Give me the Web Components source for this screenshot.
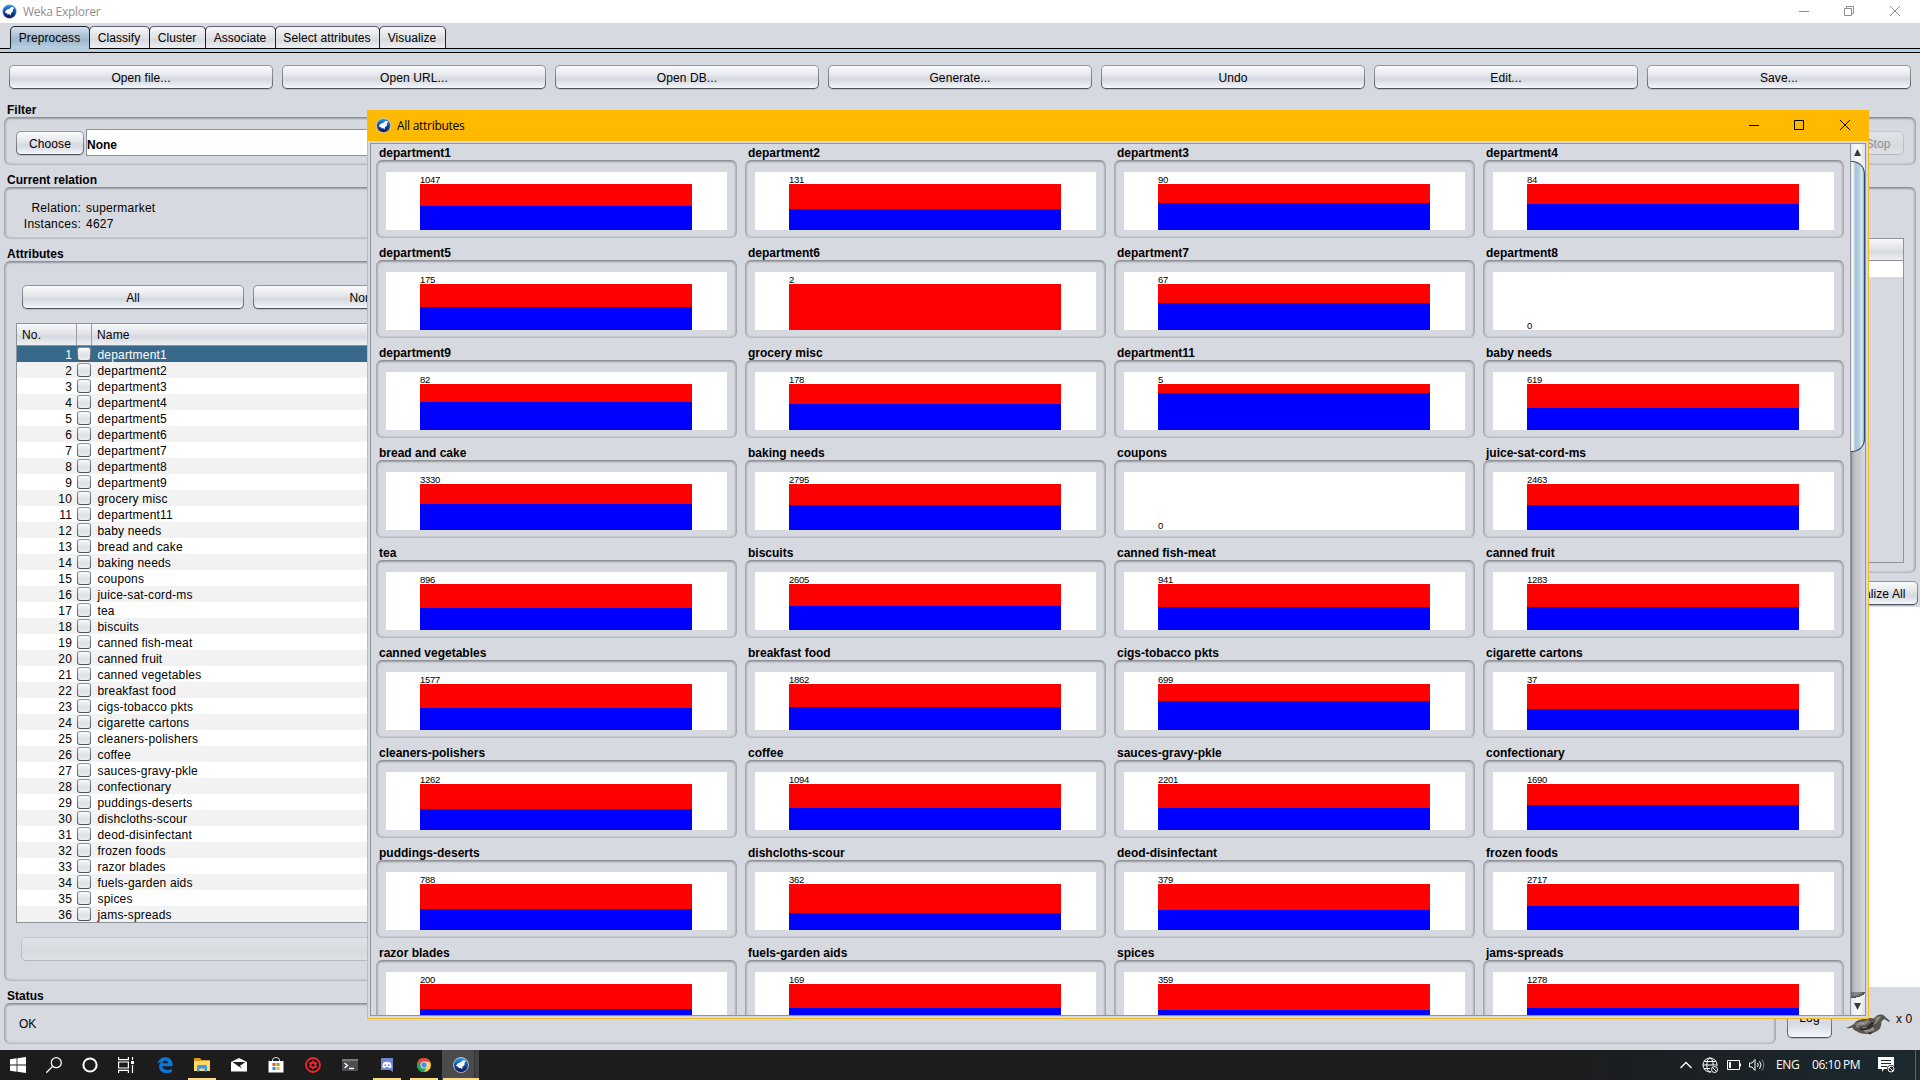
<!DOCTYPE html>
<html lang="en">
<head>
<meta charset="utf-8">
<title>Weka Explorer</title>
<style>
html,body{margin:0;height:1080px;overflow:hidden;background:#d6d9df}
body{font:12px/15px "Liberation Sans",Arial,sans-serif;color:#000;width:1920px}
</style>
</head>
<body>
<weka-desktop></weka-desktop>
<script>
const define=(name,html,init)=>customElements.define(name,class extends HTMLElement{
  constructor(){super();this.attachShadow({mode:'open'});}
  connectedCallback(){
    if(this.ready)return;this.ready=true;
    const t=document.createElement('template');
    t.innerHTML=typeof html==='function'?html(this):html;
    this.shadowRoot.append(t.content.cloneNode(true));
    if(init)init(this);
  }
});
const attr=(e,n,d='')=>e.getAttribute(n)??d;

const wekaIcon=`<svg viewBox="0 0 16 16" width="100%" height="100%"><defs><linearGradient id="g" x1="0" y1="0" x2="0" y2="1"><stop offset="0" stop-color="#2e9be8"/><stop offset=".45" stop-color="#1556b0"/><stop offset="1" stop-color="#0a0f4a"/></linearGradient></defs><circle cx="8" cy="8" r="7.5" fill="url(#g)" stroke="#dfe6f0" stroke-width=".7"/><path d="M3 8.400 5 6.200 8 5 10 3.200l1.800.1 1.200 1.200-1.300.8-.2 2.700-1.900 1.800-.5 2.400-1.700-1.500-1.900.6.1-1.500-1.600-.3z" fill="#fff"/></svg>`;

define('weka-icon',`<style>:host{display:block;width:15px;height:15px;flex:none}svg{display:block}</style>${wekaIcon}`);

define('title-bar',e=>`<style>
:host{display:flex;align-items:center;box-sizing:border-box;flex:none;font:12px/16px "Open Sans","Noto Sans",sans-serif;letter-spacing:-.28px}
span{flex:1;white-space:nowrap;padding-top:2px}
svg{display:block;flex:none;fill:none;stroke:currentColor}
</style><weka-icon></weka-icon><span><slot></slot></span>
<svg width="108" height="12" stroke-width="1">
<path d="M1 6.5h10"/>
${e.hasAttribute('restored')?'<path d="M46.5 3.5h7v7h-7zM48.5 3.5v-2h7v7h-2"/>':'<path d="M46.5 1.5h9v9h-9z"/>'}
<path d="M92 1 102 11M102 1 92 11"/></svg>`);

define('nimbus-button',`<style>
:host{display:flex;align-items:center;justify-content:center;box-sizing:border-box;height:24px;flex:none;border:1px solid transparent;border-radius:5px;white-space:nowrap;letter-spacing:.1px;
background:linear-gradient(#fafbfc,#e6e8ec 40%,#d5d8df 60%,#e3e6ec 80%,#f4f7fc) padding-box,linear-gradient(#94979c,#85898f 50%,#4d5259) border-box;box-shadow:0 1px 0 rgba(110,115,125,.28)}
:host([disabled]){color:#8e8f91;background:linear-gradient(#dfe2e6,#d9dce1 50%,#d6d9df 60%,#dee1e6) padding-box,linear-gradient(#c6c9cd,#b5b8be) border-box;box-shadow:none}
div{padding-top:3px}
</style><div><slot></slot></div>`);

define('nimbus-tab',`<style>
:host{display:flex;align-items:center;justify-content:center;box-sizing:border-box;height:23px;border:1px solid #1c2230;border-top-color:#5f646e;border-bottom:1px solid #000;border-radius:5px 5px 0 0;margin-left:-1px;white-space:nowrap;
background:linear-gradient(#f7f8fa,#dfe1e6 50%,#d6d9df 60%,#eceef2);letter-spacing:.08px}
:host([selected]){background:linear-gradient(#d6e0ea,#abc0d2 45%,#9fb8ce 65%,#b9cfe0);border-bottom-color:#b2c9da;border-top-color:#1c2230}
div{padding:1px 1px 0 0}
</style><div><slot></slot></div>`);

define('titled-panel',e=>`<style>
:host{display:flex;flex-direction:column;flex:none;box-sizing:border-box}
h2{margin:0;height:15px;font:bold 12px/17px "Liberation Sans",Arial,sans-serif;padding-left:3px;white-space:nowrap}
section{flex:1;box-sizing:border-box;border:1px solid #a6a9ae;border-top-color:#8d9095;border-bottom-color:#b7babf;border-radius:6px;
box-shadow:inset 0 1px 2px rgba(60,64,72,.34),inset 1px 0 2px rgba(60,64,72,.14),inset -1px 0 2px rgba(60,64,72,.14);display:flex;flex-direction:column;min-height:0}
</style><h2>${attr(e,'heading')}</h2><section><slot></slot></section>`);

define('attr-row',e=>{const n=+attr(e,'no'),sel=n===1;return `<style>
:host{display:flex;height:16px;align-items:center;background:${sel?'#39698a':n%2?'#fff':'#f2f2f2'};color:${sel?'#fff':'#000'};letter-spacing:.18px;white-space:nowrap}
i{font-style:normal;width:55px;text-align:right}
b{display:block;box-sizing:border-box;width:14px;height:14px;margin:0 6.500px 0 5px;border:1px solid transparent;border-radius:3px;background:linear-gradient(#fafbfc,#dcdfe5 60%,#eceff4) padding-box,linear-gradient(#94979c,#4d5259) border-box}
span,i{padding-top:3px}
</style><i>${n}</i><b></b><span>${attr(e,'name')}</span>`});

define('attr-table',`<style>
:host{display:flex;flex-direction:column;box-sizing:border-box;border:1px solid #8f939b;background:#fff;flex:none;overflow:hidden}
header{display:flex;height:22px;box-sizing:border-box;border-bottom:1px solid #8b8f97;background:linear-gradient(#f7f8fa,#e2e4e9 45%,#d6d9df 60%,#eef0f4);letter-spacing:.15px}
header div{box-sizing:border-box;padding:4px 0 0 5px;border-right:1px solid #9a9da3}
</style><header><div style="width:60px">No.</div><div style="width:15px"></div><div style="flex:1">Name</div></header><slot></slot>`);

define('attr-chart',e=>{const r=attr(e,'red');return `<style>
:host{display:block;width:361px;height:93px}
titled-panel{height:93px}
.plot{background:#fff;margin:11px 9px 7px;height:58px;padding:0 35px 0 34px;display:flex;flex-direction:column;box-sizing:border-box}
.n{height:12px;font-size:9.500px;line-height:16px;white-space:nowrap;letter-spacing:-.3px;${r?'':'margin-top:46px'}}
.r{height:${r||0}px;background:#f00}.b{flex:1;background:${r?'#00f':'none'}}
</style><titled-panel heading="${attr(e,'name')}"><div class="plot"><div class="n">${attr(e,'count')}</div><div class="r"></div><div class="b"></div></div></titled-panel>`});

define('nimbus-scroll',`<style>
:host{display:flex;flex-direction:column;width:15px;flex:none;box-sizing:border-box;border-left:1px solid #8f9298}
.u,.d{height:17px;background:linear-gradient(90deg,#e4e6ea,#fbfbfc 50%,#e0e2e7);display:flex;align-items:center;padding-left:2px;flex:none}
svg{display:block}
.track{flex:1;background:linear-gradient(90deg,#77787c,#aeb0b4 12%,#c3c4c9 35%,#cbcdd2 70%,#d9dbe0);display:flex;flex-direction:column}
.top{background:linear-gradient(#eceef1 50%,#0000 50%)}
.thumb{height:291px;box-sizing:border-box;border:1px solid #2d4b66;border-left:0;border-radius:0 13px 13px 0;background:linear-gradient(90deg,#dfe8ef 0,#f4f8fb 15%,#a9c3d8 34%,#b4cddf 60%,#d5ecf8 82%,#8fb0c8)}
.end{margin-top:auto;height:6px;background:radial-gradient(ellipse 14px 6px at 0 0,rgba(70,72,76,.5) 60%,#45474b 99%,#eceef1 100%)}
</style><div class="u"><svg width="9" height="9"><path d="M4.500 1 8 8H1z" fill="#3a3a3c"/></svg></div>
<div class="track"><div class="top"><div class="thumb"></div></div><div class="end"></div></div>
<div class="d"><svg width="9" height="9"><path d="M4.500 8 8 1H1z" fill="#3a3a3c"/></svg></div>`);

const names='department1,department2,department3,department4,department5,department6,department7,department8,department9,grocery misc,department11,baby needs,bread and cake,baking needs,coupons,juice-sat-cord-ms,tea,biscuits,canned fish-meat,canned fruit,canned vegetables,breakfast food,cigs-tobacco pkts,cigarette cartons,cleaners-polishers,coffee,sauces-gravy-pkle,confectionary,puddings-deserts,dishcloths-scour,deod-disinfectant,frozen foods,razor blades,fuels-garden aids,spices,jams-spreads'.split(',');
const counts=[1047,131,90,84,175,2,67,0,82,178,5,619,3330,2795,0,2463,896,2605,941,1283,1577,1862,699,37,1262,1094,2201,1690,788,362,379,2717,200,169,359,1278];
const reds=[22,25,19,20,23,46,19,0,18,20,9,24,20,21,0,21,24,22,23,23,24,23,17,25,25,24,24,21,25,29,26,22,25,24,26,24];

define('attributes-window',`<style>
:host{display:flex;flex-direction:column;box-sizing:border-box;width:1502px;height:909px;border:1px solid #f9b924;border-top:0;background:#d6d9df}
title-bar{height:31px;background:#ffb900;padding:0 12px 1px 8px}
.view{flex:1;min-height:0;display:flex;box-sizing:border-box;margin:2px 2px 2px 2px;border:1px solid #8f939b;overflow:hidden}
.grid{flex:1;display:grid;grid-template-columns:repeat(4,361px);grid-auto-rows:93px;gap:7px 8px;padding:1px 0 0 5px;align-content:start}
</style><title-bar><weka-caption>All attributes</weka-caption></title-bar>
<div class="view"><div class="grid">${names.map((n,i)=>`<attr-chart name="${n}" count="${counts[i]}" red="${reds[i]||''}"></attr-chart>`).join('')}</div><nimbus-scroll></nimbus-scroll></div>`);
define('weka-caption',`<style>:host{display:inline-block;padding-left:6px}</style><slot></slot>`);

const ic={
start:'<path fill="#fff" d="M0 2.2 6.6 1.3v6.3H0zM7.4 1.2 16 0v7.6H7.4zM0 8.4h6.6v6.3L0 13.8zM7.4 8.4H16V16L7.4 14.8z"/>',
search:'<g fill="none" stroke="#fff" stroke-width="1.3"><circle cx="10.3" cy="5.7" r="5"/><path d="M6.7 9.3.3 15.7"/></g>',
cortana:'<circle cx="8" cy="8" r="6.6" fill="none" stroke="#fff" stroke-width="2"/>',
view:'<g fill="none" stroke="#fff" stroke-width="1.2"><path d="M.6 0v2.6h9.8V0M.6 16v-2.6h9.8V16M.6 5h9.8v6H.6zM14.5 0v3M14.5 8v8"/></g><path fill="#fff" d="M13 4h3v3h-3z"/>',
edge:'<path fill="#0a78d7" d="M.5 7.2C1.2 3 4.2.3 8.2.3c4.8 0 7.4 3.4 7.4 7.2v1.8H5.4c.2 2.3 2.1 3.6 4.8 3.6 1.7 0 3.2-.4 4.5-1.2v3.2c-1.3.7-3.1 1.1-5.1 1.1-4.6 0-7.5-2.6-7.5-6.6 0-2 .9-3.8 2.8-5C3 5 1.400 5.600.5 7.200zM5.500 6.300h5.400c0-1.700-1-2.700-2.600-2.700-1.500 0-2.500 1-2.800 2.700z"/>',
folder:'<path fill="#d79a1c" d="M0 1h6l1.500 2H16v3H0z"/><path fill="#ffd969" d="M0 4h16v10H0z"/><path fill="#3f9be0" d="M3 14.500V9.500Q3 8 4.500 8h7Q13 8 13 9.500v5h-2.500v-3h-5v3z"/>',
mail:'<path fill="#fff" d="M0 5 8 1l8 4v9.500H0z"/><path fill="#1c1c1c" d="M1.500 5h13L9 8.800 11 11.500 7 9z"/>',
store:'<path fill="none" stroke="#ddd" d="M4.500 5V3q0-2.500 3.500-2.500T11.500 3v2"/><path fill="#fff" d="M.500 4h15v11.500H.500z"/><path fill="#f25022" d="M4.500 6h3v3h-3z"/><path fill="#7fba00" d="M8.500 6h3v3h-3z"/><path fill="#00a4ef" d="M4.500 10h3v3h-3z"/><path fill="#ffb900" d="M8.500 10h3v3h-3z"/>',
red:'<circle cx="8" cy="8" r="7" fill="#111" stroke="#f0282d" stroke-width="1.800"/><circle cx="8" cy="8" r="2.500" fill="none" stroke="#f0282d" stroke-width="1.800"/><path stroke="#f0282d" stroke-width="1.700" d="M8 3.500V6M8 10v2.500M4.200 5.800l2 1.200M9.800 9l2 1.200M4.200 10.200l2-1.200M9.800 7l2-1.200"/>',
cmd:'<path fill="#4b4d50" d="M0 2h16v12H0z"/><path fill="#77797c" d="M0 2h16v2H0z"/><path d="M2.500 6 5.500 8.500 2.500 11M7 11.500h5" fill="none" stroke="#fff" stroke-width="1.300"/>',
discord:'<path fill="#6f83cf" d="M2 1h12v14l-3-2H2z"/><path fill="#fff" d="M4.500 5.500Q8 3.800 11.500 5.500q1.300 2.500 1 5l-2 .8-.8-1H6.300l-.8 1-2-.8q-.300-2.500 1-5z"/><circle cx="6.300" cy="8.200" r="1" fill="#6f83cf"/><circle cx="9.700" cy="8.200" r="1" fill="#6f83cf"/>',
chrome:'<circle cx="8" cy="8" r="7" fill="#ffcd41"/><path fill="#de4a3d" d="M8 8 1.940 4.500A7 7 0 0 1 14.100 4.600H8z"/><path fill="#23a05c" d="M8 8 1.940 4.500A7 7 0 0 0 8 15l3-5z"/><path fill="#de4a3d" d="M8 4.600h6.100A7 7 0 0 0 1.940 4.500L5 9z"/><circle cx="8" cy="8" r="3.500" fill="#f4f4f4"/><circle cx="8" cy="8" r="2.700" fill="#4a8bf0"/>'
};
define('task-item',e=>{const k=attr(e,'icon');return `<style>
:host{display:flex;flex-direction:column;align-items:center;width:${e.hasAttribute('sys')?36:37}px;height:30px;flex:none}
:host([active]){background:linear-gradient(90deg,#4b4b4b 32px,#333 32px,#333 33px,#424242 33px)}
.i{height:28px;width:16px;display:flex;align-items:center;padding-top:2px;box-sizing:border-box}
.u{height:2px;width:${e.hasAttribute('active')?36:28}px;background:${e.hasAttribute('open')?'#fbdc84':'none'};flex:none}
svg{display:block}
weka-icon{width:16px;height:16px}
</style><div class="i">${k==='weka'?'<weka-icon></weka-icon>':`<svg width="16" height="16" viewBox="0 0 16 16">${ic[k]}</svg>`}</div><div class="u"></div>`});

define('task-bar',`<style>
:host{display:flex;height:30px;flex:none;background:linear-gradient(90deg,#1c1c1c,#1c1c1d 80%,#1b2024 88%,#1c2a30);color:#fff;box-sizing:border-box;font:12px/16px "Open Sans","Noto Sans",sans-serif}
.gap{width:2px;flex:none}.sp{flex:1}
.tray{display:flex;align-items:center;height:30px;white-space:nowrap}
svg{display:block;flex:none;fill:none;stroke:#fff}
.line{width:1px;height:30px;background:#5a646a;margin-left:20px;margin-right:4px}
</style>
<task-item sys icon="start"></task-item><task-item sys icon="search"></task-item><task-item sys icon="cortana"></task-item><task-item sys icon="view"></task-item><div class="gap"></div>
<task-item icon="edge"></task-item><task-item icon="folder" open></task-item><task-item icon="mail"></task-item><task-item icon="store"></task-item><task-item icon="red"></task-item><task-item icon="cmd"></task-item><task-item icon="discord" open></task-item><task-item icon="chrome" open></task-item><task-item icon="weka" open active></task-item>
<div class="sp"></div>
<div class="tray">
<svg width="14" height="8" style="margin-right:9px"><path stroke-width="1.300" d="M1.500 7 7 1.500 12.500 7"/></svg>
<svg width="17" height="17" style="margin-right:7px"><circle cx="8" cy="8" r="7"/><ellipse cx="8" cy="8" rx="3.200" ry="7"/><path d="M1 8h14M2 4.500h12M2 11.500h6"/><circle cx="12.500" cy="12.500" r="4" fill="#1b2024" stroke="none"/><circle cx="12.500" cy="12.500" r="3"/><path d="m10.500 10.500 4 4"/></svg>
<svg width="16" height="12" style="margin-right:7px"><path d="M1.500 1.500h12v9h-12zM14.500 4.500v3"/><path fill="#fff" stroke="none" d="M3 3h2v6H3z"/></svg>
<svg width="17" height="14" style="margin-right:10px"><path d="M.500 5v4h2.500l3 3.500v-11L3 5zM8.500 5q1.500 2 0 4M10.500 3.200q3 3.800 0 7.600"/><path stroke="#888" d="M12.800 1.500q4 5.500 0 11"/></svg>
<span style="width:36px;letter-spacing:-.4px">ENG</span><span style="width:66px;letter-spacing:-.45px">06:10 PM</span>
<svg width="17" height="16"><path fill="#fff" stroke="none" d="M0 0h16v12H6l-2 3v-3H0z"/><path stroke="#1c262b" d="M3 3.500h10M3 6.500h10M3 9.500h6"/><circle cx="13" cy="12" r="4" fill="#1c262b" stroke="none"/><circle cx="13" cy="12" r="3"/><path d="m11 10 4 4"/></svg>
<div class="line"></div></div>`);

define('weka-bird',`<style>:host{display:block;width:46px;height:24px;flex:none}svg{display:block}</style>
<svg width="46" height="24" viewBox="0 0 46 24"><path fill="#58544f" d="M1 15q5-2 8-4 2-4 7-4.500 5-3 13-1 2-3.500 6-4 3-.500 5 2l5 4.500-.800 1-5-3q-2 2-3 3 1 7-6 10l-9 2q-6 0-10-3-3-1-4-3.500-3 1-6 .500z"/><path fill="#8d8882" d="M10 11q8-4 14-2l-4 3-8 1zM31 4l5-1-2 4-4 4zM18 17l10-3 2 3-9 3z"/><path fill="#2f2c29" d="M13 15l10-2 4-4 3 2-5 5-8 1.500zM22 20l7-1-4 2.500z"/><path fill="none" stroke="#a7a29c" stroke-width=".8" d="M14 9.500l5 1M21 7l4 2M11 13l4 2M17 15l5-1M28 12l3-3M24 18l4-2"/></svg>`);

define('weka-desktop',`<style>
:host{display:flex;flex-direction:column;width:1920px;height:1080px;background:#d6d9df;overflow:hidden}
.main{height:23px;background:#fff;color:#8f8f8f;padding:0 14px 1px 2px}
.tabs{display:flex;height:30px;box-sizing:border-box;padding:3px 0 0 11px;flex:none;background:linear-gradient(#0000 25px,#000 25px,#000 26px,#b2cddf 26px,#bad0de 29px,#000 29px)}
.tools{display:grid;grid-template-columns:repeat(7,264px);gap:9px;padding:12px 9px 13px;flex:none}
.filter{height:63px;margin:0 4px}
.frow{display:flex;padding:11px 11px 0;gap:2px}
.field{flex:1;height:27px;box-sizing:border-box;border:1px solid #8f939b;background:#fff;font-weight:bold;padding:8px 0 0 0;margin-right:8px}
.cols{display:flex;height:822px;flex:none}
.left{display:flex;flex-direction:column;gap:7px;padding:7px 0 0 4px;width:953px;box-sizing:border-box;flex:none}
.right{flex:1;display:flex;flex-direction:column;padding-top:7px}
.rel{display:grid;grid-template-columns:67px auto;gap:0 5px;padding:12px 0 0 9px;line-height:16px;letter-spacing:.25px}
.rel :nth-child(odd){text-align:right}
.btns{display:flex;gap:9px;padding:23px 17px 14px}
.status{display:flex;height:63px;padding:1px 0 0 4px;box-sizing:border-box;flex:none}
.white{flex:1;background:#fff;margin-top:2px}
.sel{display:flex;flex-direction:column;border:1px solid #8f939b;margin:50px 11px 0;height:323px}
attributes-window{position:absolute;left:367px;top:110px}
</style>
<title-bar class="main" restored><weka-caption style="padding-left:6px">Weka Explorer</weka-caption></title-bar>
<div class="tabs"><nimbus-tab selected style="width:80px">Preprocess</nimbus-tab><nimbus-tab style="width:61px">Classify</nimbus-tab><nimbus-tab style="width:57px">Cluster</nimbus-tab><nimbus-tab style="width:71px">Associate</nimbus-tab><nimbus-tab style="width:105px">Select attributes</nimbus-tab><nimbus-tab style="width:67px">Visualize</nimbus-tab></div>
<div class="tools">${['Open file...','Open URL...','Open DB...','Generate...','Undo','Edit...','Save...'].map(x=>`<nimbus-button>${x}</nimbus-button>`).join('')}</div>
<titled-panel class="filter" heading="Filter"><div class="frow"><nimbus-button style="width:68px;margin-top:2px">Choose</nimbus-button><div class="field">None</div><nimbus-button disabled style="width:52px;margin-top:2px">Stop</nimbus-button></div></titled-panel>
<div class="cols"><div class="left">
<titled-panel heading="Current relation" style="height:67px"><div class="rel"><span>Relation:</span><span>supermarket</span><span>Instances:</span><span>4627</span></div></titled-panel>
<titled-panel heading="Attributes" style="height:735px"><div class="btns"><nimbus-button style="width:222px">All</nimbus-button><nimbus-button style="width:222px">None</nimbus-button><nimbus-button style="width:222px">Invert</nimbus-button><nimbus-button style="width:222px">Pattern</nimbus-button></div>
<attr-table style="margin:0 11px">${names.map((n,i)=>`<attr-row no="${i+1}" name="${n}"></attr-row>`).join('')}</attr-table>
<nimbus-button disabled style="margin:14px 16px 0"></nimbus-button></titled-panel>
</div>
<div class="right">
<titled-panel heading="Selected attribute" style="height:401px;margin:0 4px 0 6px"><div class="sel"><div style="height:21px;border-bottom:1px solid #8b8f97;background:linear-gradient(#f7f8fa,#e2e4e9 45%,#d6d9df 60%,#eef0f4)"></div><div style="height:16px;background:#fff"></div></div></titled-panel>
<div style="display:flex;justify-content:flex-end;padding:8px 2px 0"><nimbus-button style="width:90px">Visualize All</nimbus-button></div>
<div class="white"></div>
</div></div>
<div class="status"><titled-panel heading="Status" style="width:1772px;height:56px"><div style="padding:13px 0 0 14px">OK</div></titled-panel>
<nimbus-button style="width:45px;height:39px;margin:11px 0 0 11px;padding-bottom:3px">Log</nimbus-button><weka-bird style="margin:25px 5px 0 13px"></weka-bird><span style="margin-top:24px;white-space:nowrap;letter-spacing:.1px">x 0</span></div>
<task-bar></task-bar>
<attributes-window></attributes-window>`);
</script>
</body>
</html>
